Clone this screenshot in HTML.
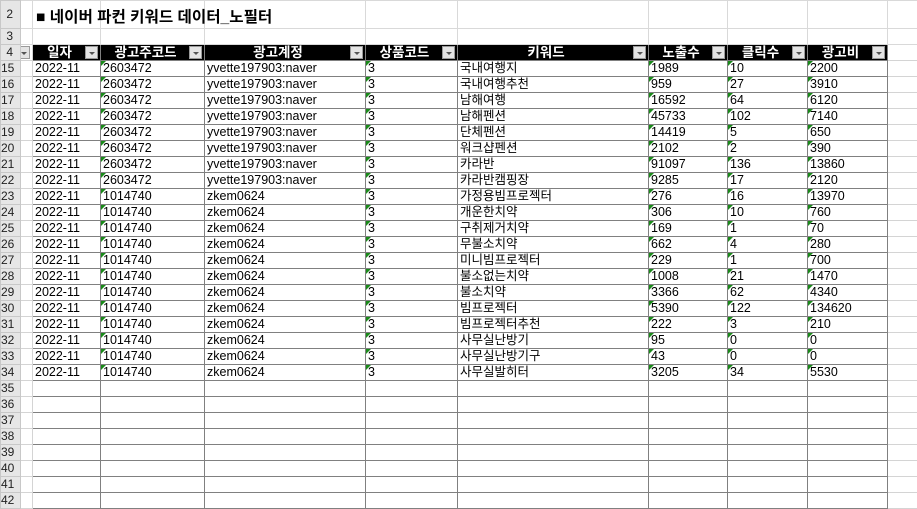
<!DOCTYPE html>
<html><head><meta charset="utf-8"><style>
*{margin:0;padding:0;box-sizing:border-box}
body{width:917px;height:499px;overflow:hidden;background:#fff;font-family:"Liberation Sans","Noto Sans CJK KR",sans-serif;font-size:12.5px;color:#000;position:relative}
table{position:absolute;left:0;top:0;border-collapse:collapse;table-layout:fixed;width:927px}
td{height:16px;padding:0 0 0 2px;white-space:nowrap;overflow:hidden;line-height:15px;border:1px solid #808080;position:relative}
td.rh{background:#e6e6e6;border:1px solid #c8c8c8;text-align:right;padding:0 7px 0 0;font-size:12px;color:#222;overflow:hidden}
td.a,td.j{border:1px solid #d4d4d4}
tr.top td{border:1px solid #d9d9d9}
tr.top td.rh{border:1px solid #c8c8c8}
tr.hd td.c{background:#000;color:#fff;font-weight:bold;text-align:center;padding-right:16px;font-size:13.5px}
.fb{position:absolute;right:2px;top:1px;width:13px;height:13px;background:#e4e4e4;border:1px solid #9a9a9a}
.fb:after{content:"";position:absolute;left:3px;top:5px;border-left:3px solid transparent;border-right:3px solid transparent;border-top:3px solid #555}
td.g:before{content:"";position:absolute;left:0;top:0;border-top:5px solid #1a8a1a;border-right:5px solid transparent}
.title{position:absolute;left:36px;top:5px;font-size:15.6px;font-weight:bold;font-family:"Liberation Sans","Noto Sans CJK KR",sans-serif}
</style></head><body>
<table>
<colgroup><col style="width:20px"><col style="width:12px"><col style="width:68px"><col style="width:104px"><col style="width:161px"><col style="width:92px"><col style="width:191px"><col style="width:79px"><col style="width:80px"><col style="width:80px"><col style="width:40px"></colgroup>
<tr class="top" style="height:28px"><td class="rh" style="height:28px">2</td><td></td><td></td><td></td><td></td><td></td><td></td><td></td><td></td><td></td><td></td></tr>
<tr class="top"><td class="rh">3</td><td></td><td></td><td></td><td></td><td></td><td></td><td></td><td></td><td></td><td></td></tr>
<tr class="hd"><td class="rh">4</td><td class="a"><span class="fb"></span></td><td class="c">일자<span class="fb"></span></td><td class="c">광고주코드<span class="fb"></span></td><td class="c">광고계정<span class="fb"></span></td><td class="c">상품코드<span class="fb"></span></td><td class="c">키워드<span class="fb"></span></td><td class="c">노출수<span class="fb"></span></td><td class="c">클릭수<span class="fb"></span></td><td class="c">광고비<span class="fb"></span></td><td class="j"></td></tr>
<tr><td class="rh">15</td><td class="a"></td><td>2022-11</td><td class="g">2603472</td><td>yvette197903:naver</td><td class="g">3</td><td>국내여행지</td><td class="g">1989</td><td class="g">10</td><td class="g">2200</td><td class="j"></td></tr>
<tr><td class="rh">16</td><td class="a"></td><td>2022-11</td><td class="g">2603472</td><td>yvette197903:naver</td><td class="g">3</td><td>국내여행추천</td><td class="g">959</td><td class="g">27</td><td class="g">3910</td><td class="j"></td></tr>
<tr><td class="rh">17</td><td class="a"></td><td>2022-11</td><td class="g">2603472</td><td>yvette197903:naver</td><td class="g">3</td><td>남해여행</td><td class="g">16592</td><td class="g">64</td><td class="g">6120</td><td class="j"></td></tr>
<tr><td class="rh">18</td><td class="a"></td><td>2022-11</td><td class="g">2603472</td><td>yvette197903:naver</td><td class="g">3</td><td>남해펜션</td><td class="g">45733</td><td class="g">102</td><td class="g">7140</td><td class="j"></td></tr>
<tr><td class="rh">19</td><td class="a"></td><td>2022-11</td><td class="g">2603472</td><td>yvette197903:naver</td><td class="g">3</td><td>단체펜션</td><td class="g">14419</td><td class="g">5</td><td class="g">650</td><td class="j"></td></tr>
<tr><td class="rh">20</td><td class="a"></td><td>2022-11</td><td class="g">2603472</td><td>yvette197903:naver</td><td class="g">3</td><td>워크샵펜션</td><td class="g">2102</td><td class="g">2</td><td class="g">390</td><td class="j"></td></tr>
<tr><td class="rh">21</td><td class="a"></td><td>2022-11</td><td class="g">2603472</td><td>yvette197903:naver</td><td class="g">3</td><td>카라반</td><td class="g">91097</td><td class="g">136</td><td class="g">13860</td><td class="j"></td></tr>
<tr><td class="rh">22</td><td class="a"></td><td>2022-11</td><td class="g">2603472</td><td>yvette197903:naver</td><td class="g">3</td><td>카라반캠핑장</td><td class="g">9285</td><td class="g">17</td><td class="g">2120</td><td class="j"></td></tr>
<tr><td class="rh">23</td><td class="a"></td><td>2022-11</td><td class="g">1014740</td><td>zkem0624</td><td class="g">3</td><td>가정용빔프로젝터</td><td class="g">276</td><td class="g">16</td><td class="g">13970</td><td class="j"></td></tr>
<tr><td class="rh">24</td><td class="a"></td><td>2022-11</td><td class="g">1014740</td><td>zkem0624</td><td class="g">3</td><td>개운한치약</td><td class="g">306</td><td class="g">10</td><td class="g">760</td><td class="j"></td></tr>
<tr><td class="rh">25</td><td class="a"></td><td>2022-11</td><td class="g">1014740</td><td>zkem0624</td><td class="g">3</td><td>구취제거치약</td><td class="g">169</td><td class="g">1</td><td class="g">70</td><td class="j"></td></tr>
<tr><td class="rh">26</td><td class="a"></td><td>2022-11</td><td class="g">1014740</td><td>zkem0624</td><td class="g">3</td><td>무불소치약</td><td class="g">662</td><td class="g">4</td><td class="g">280</td><td class="j"></td></tr>
<tr><td class="rh">27</td><td class="a"></td><td>2022-11</td><td class="g">1014740</td><td>zkem0624</td><td class="g">3</td><td>미니빔프로젝터</td><td class="g">229</td><td class="g">1</td><td class="g">700</td><td class="j"></td></tr>
<tr><td class="rh">28</td><td class="a"></td><td>2022-11</td><td class="g">1014740</td><td>zkem0624</td><td class="g">3</td><td>불소없는치약</td><td class="g">1008</td><td class="g">21</td><td class="g">1470</td><td class="j"></td></tr>
<tr><td class="rh">29</td><td class="a"></td><td>2022-11</td><td class="g">1014740</td><td>zkem0624</td><td class="g">3</td><td>불소치약</td><td class="g">3366</td><td class="g">62</td><td class="g">4340</td><td class="j"></td></tr>
<tr><td class="rh">30</td><td class="a"></td><td>2022-11</td><td class="g">1014740</td><td>zkem0624</td><td class="g">3</td><td>빔프로젝터</td><td class="g">5390</td><td class="g">122</td><td class="g">134620</td><td class="j"></td></tr>
<tr><td class="rh">31</td><td class="a"></td><td>2022-11</td><td class="g">1014740</td><td>zkem0624</td><td class="g">3</td><td>빔프로젝터추천</td><td class="g">222</td><td class="g">3</td><td class="g">210</td><td class="j"></td></tr>
<tr><td class="rh">32</td><td class="a"></td><td>2022-11</td><td class="g">1014740</td><td>zkem0624</td><td class="g">3</td><td>사무실난방기</td><td class="g">95</td><td class="g">0</td><td class="g">0</td><td class="j"></td></tr>
<tr><td class="rh">33</td><td class="a"></td><td>2022-11</td><td class="g">1014740</td><td>zkem0624</td><td class="g">3</td><td>사무실난방기구</td><td class="g">43</td><td class="g">0</td><td class="g">0</td><td class="j"></td></tr>
<tr><td class="rh">34</td><td class="a"></td><td>2022-11</td><td class="g">1014740</td><td>zkem0624</td><td class="g">3</td><td>사무실발히터</td><td class="g">3205</td><td class="g">34</td><td class="g">5530</td><td class="j"></td></tr>
<tr><td class="rh">35</td><td class="a"></td><td></td><td></td><td></td><td></td><td></td><td></td><td></td><td></td><td class="j"></td></tr>
<tr><td class="rh">36</td><td class="a"></td><td></td><td></td><td></td><td></td><td></td><td></td><td></td><td></td><td class="j"></td></tr>
<tr><td class="rh">37</td><td class="a"></td><td></td><td></td><td></td><td></td><td></td><td></td><td></td><td></td><td class="j"></td></tr>
<tr><td class="rh">38</td><td class="a"></td><td></td><td></td><td></td><td></td><td></td><td></td><td></td><td></td><td class="j"></td></tr>
<tr><td class="rh">39</td><td class="a"></td><td></td><td></td><td></td><td></td><td></td><td></td><td></td><td></td><td class="j"></td></tr>
<tr><td class="rh">40</td><td class="a"></td><td></td><td></td><td></td><td></td><td></td><td></td><td></td><td></td><td class="j"></td></tr>
<tr><td class="rh">41</td><td class="a"></td><td></td><td></td><td></td><td></td><td></td><td></td><td></td><td></td><td class="j"></td></tr>
<tr><td class="rh">42</td><td class="a"></td><td></td><td></td><td></td><td></td><td></td><td></td><td></td><td></td><td class="j"></td></tr>
</table>
<div class="title">■ 네이버 파컨 키워드 데이터_노필터</div>
</body></html>
